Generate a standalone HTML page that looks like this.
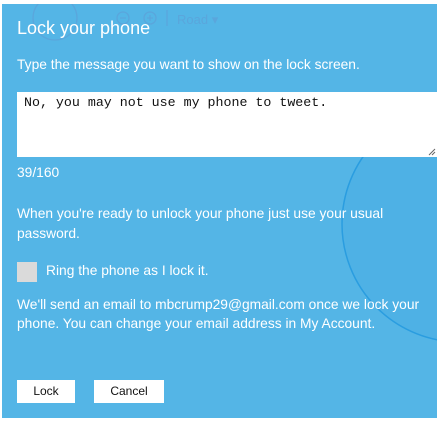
<!DOCTYPE html>
<html><head><style>
body{margin:0;width:442px;height:421px;background:#fff;position:relative;overflow:hidden;font-family:"Liberation Sans",sans-serif;}
#p{position:absolute;left:2px;top:4px;width:435px;height:414px;background:#54b5e6;overflow:hidden;}
.t{position:absolute;color:#fff;font-size:13.8px;white-space:nowrap;}
#ta{position:absolute;left:15px;top:88px;width:420px;height:65px;background:#fff;}
#ta span{position:absolute;left:7px;top:3px;font-family:"Liberation Mono",monospace;font-size:13.3px;color:#111;}
.b{position:absolute;top:376px;height:23px;background:#fff;color:#111;font-family:"Liberation Sans",sans-serif;font-size:12px;text-align:center;line-height:23px;}
</style></head><body>
<div id="p">
<svg width="435" height="414" style="position:absolute;left:0;top:0">
<circle cx="458" cy="220" r="118" fill="#4eb1e5" stroke="#2a9de0" stroke-width="1.5"/>
<g fill="none" stroke="#5aa6dc" stroke-width="1.3">
<circle cx="53" cy="14" r="22"/><circle cx="121" cy="14" r="6"/><circle cx="148" cy="14" r="6"/>
<path d="M118 14h6M145 14h6M148 11v6"/>
<line x1="165" y1="6" x2="165" y2="22"/></g>
<text x="175" y="20" fill="#5aa6dc" font-size="13" font-family="Liberation Sans">Road ▾</text>
</svg>
<div class="t" style="left:15px;top:14px;font-size:18px;">Lock your phone</div>
<div class="t" style="left:15px;top:53px;">Type the message you want to show on the lock screen.</div>
<div id="ta"><span>No, you may not use my phone to tweet.</span>
<svg width="8" height="8" style="position:absolute;right:1px;bottom:1px"><path d="M7 1L1 7M7 4L4 7" stroke="#666" stroke-width="1"/></svg></div>
<div class="t" style="left:15px;top:161px;">39/160</div>
<div class="t" style="left:15px;top:202px;">When you're ready to unlock your phone just use your usual</div>
<div class="t" style="left:15px;top:222px;">password.</div>
<div style="position:absolute;left:15px;top:258px;width:20px;height:20px;background:#dadada"></div>
<div class="t" style="left:44px;top:259px;">Ring the phone as I lock it.</div>
<div class="t" style="left:15px;top:293px;">We'll send an email to mbcrump29@gmail.com once we lock your</div>
<div class="t" style="left:15px;top:312px;">phone. You can change your email address in My Account.</div>
<div class="b" style="left:15px;width:58px;">Lock</div>
<div class="b" style="left:92px;width:70px;">Cancel</div>
</div>
</body></html>
